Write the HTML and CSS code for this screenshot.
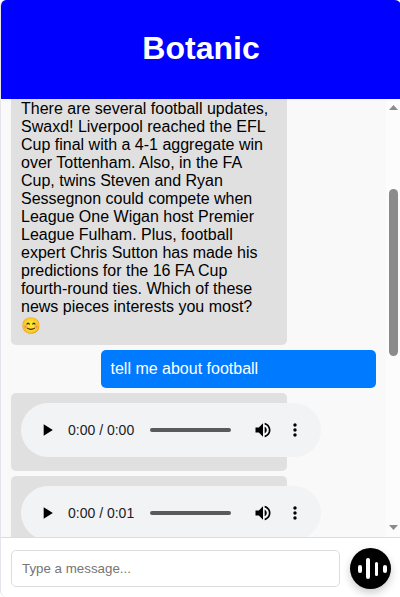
FILE: index.html
```html
<!DOCTYPE html>
<html lang="en">
<head>
<meta charset="utf-8">
<meta name="viewport" content="width=device-width, initial-scale=1">
<title>Botanic</title>
<link rel="stylesheet" href="styles.css">
</head>
<body>
<svg class="sprite" aria-hidden="true">
  <symbol id="play" viewBox="0 0 24 24"><path d="M8 5v14l11-7z"/></symbol>
  <symbol id="volume" viewBox="0 0 24 24"><path d="M3 9v6h4l5 5V4L7 9H3zm13.5 3c0-1.77-1.02-3.29-2.5-4.03v8.05c1.48-.73 2.5-2.25 2.5-4.02zM14 3.23v2.06c2.89.86 5 3.54 5 6.71s-2.11 5.85-5 6.71v2.06c4.01-.91 7-4.49 7-8.77s-2.99-7.86-7-8.77z"/></symbol>
  <symbol id="more" viewBox="0 0 24 24"><path d="M12 8c1.1 0 2-.9 2-2s-.9-2-2-2-2 .9-2 2 .9 2 2 2zm0 2c-1.1 0-2 .9-2 2s.9 2 2 2 2-.9 2-2-.9-2-2-2zm0 6c-1.1 0-2 .9-2 2s.9 2 2 2 2-.9 2-2-.9-2-2-2z"/></symbol>
</svg>
<div class="chat">
  <header class="chat-header"><h1>Botanic</h1></header>
  <main class="chat-body">
    <div class="messages">
      <div class="message bot continued">There are several football updates, Swaxd! Liverpool reached the EFL Cup final with a 4-1 aggregate win over Tottenham. Also, in the FA Cup, twins Steven and Ryan Sessegnon could compete when League One Wigan host Premier League Fulham. Plus, football expert Chris Sutton has made his predictions for the 16 FA Cup fourth-round ties. Which of these news pieces interests you most? 😊</div>
      <div class="message user">tell me about football</div>
      <div class="message bot voice">
        <div class="player">
          <button type="button" aria-label="Play"><svg><use href="#play"/></svg></button>
          <span class="time">0:00 / 0:00</span>
          <input class="seek" type="range" min="0" max="1" value="0" aria-label="Seek">
          <button type="button" aria-label="Mute"><svg><use href="#volume"/></svg></button>
          <button type="button" aria-label="More options"><svg><use href="#more"/></svg></button>
        </div>
      </div>
      <div class="message bot voice">
        <div class="player">
          <button type="button" aria-label="Play"><svg><use href="#play"/></svg></button>
          <span class="time">0:00 / 0:01</span>
          <input class="seek" type="range" min="0" max="1" value="0" aria-label="Seek">
          <button type="button" aria-label="Mute"><svg><use href="#volume"/></svg></button>
          <button type="button" aria-label="More options"><svg><use href="#more"/></svg></button>
        </div>
      </div>
    </div>
    <div class="scrollbar" aria-hidden="true">
      <svg class="arrow" viewBox="0 0 9 5"><path d="M0 5L4.500 0L9 5z"/></svg>
      <div class="track"><div class="thumb"></div></div>
      <svg class="arrow" viewBox="0 0 9 5"><path d="M0 0L4.500 5L9 0z"/></svg>
    </div>
  </main>
  <form class="composer">
    <input class="text" type="text" placeholder="Type a message..." aria-label="Message">
    <button class="speak" type="button" aria-label="Voice input">
      <svg viewBox="0 0 41 41"><rect x="8" y="17" width="4" height="8" rx="2"/><rect x="16" y="10" width="4" height="21" rx="2"/><rect x="25" y="14" width="3" height="14" rx="1.500"/><rect x="33" y="17" width="4" height="8" rx="2"/></svg>
    </button>
  </form>
</div>
</body>
</html>
```

FILE: styles.css
```css
* {
  box-sizing: border-box;
}

body {
  margin: 0;
  overflow: hidden;
  background: #fff;
  font-family: "Liberation Sans", Arial, sans-serif;
  font-size: 16px;
}

.sprite {
  display: none;
}

.chat {
  display: flex;
  flex-direction: column;
  height: 100vh;
  margin-right: -1px;
  overflow: hidden;
  border-left: 1px solid #e4e4ea;
  border-radius: 6px;
  background: #fff;
}

.chat-header {
  flex: none;
  padding: 30px 0 32px;
  background: #00f;
  color: #fff;
  text-align: center;
}

.chat-header h1 {
  margin: 0;
  font-size: 32px;
  line-height: 37px;
}

.chat-body {
  display: flex;
  flex: 1;
  min-height: 0;
  background: #f9f9f9;
}

.messages {
  display: flex;
  flex: 1;
  flex-direction: column;
  gap: 5px;
  min-width: 0;
  padding: 0 10px;
  overflow: hidden;
}

.message {
  flex: none;
  box-sizing: content-box;
  width: 70%;
  padding: 10px;
  border-radius: 5px;
}

.bot {
  align-self: flex-start;
  background: #e0e0e0;
  color: #000;
}

.user {
  align-self: flex-end;
  background: #007bff;
  color: #fff;
}

.continued {
  padding-top: 1px;
  border-radius: 0 0 5px 5px;
}

.voice {
  padding-bottom: 14px;
}

.player {
  display: flex;
  align-items: center;
  width: 300px;
  height: 54px;
  padding: 0 10px;
  border-radius: 27px;
  background: #f1f3f4;
}

.player button {
  display: flex;
  flex: none;
  align-items: center;
  justify-content: center;
  width: 32px;
  height: 32px;
  padding: 0;
  border: 0;
  background: none;
}

.player svg {
  width: 20px;
  height: 20px;
}

.time {
  margin: 0 16px 0 5px;
  color: #202124;
  font-size: 14px;
  white-space: nowrap;
}

.seek {
  flex: 1;
  min-width: 0;
  height: 4px;
  margin: 0 16px 0 0;
  border-radius: 2px;
  background: #5a5a5a;
  appearance: none;
}

.seek::-webkit-slider-thumb {
  width: 0;
  height: 0;
  appearance: none;
}

.scrollbar {
  display: flex;
  flex: none;
  flex-direction: column;
  align-items: center;
  width: 15px;
  padding: 6px 0 7px;
  background: #fcfcfc;
}

.arrow {
  width: 9px;
  height: 5px;
  fill: #8b8b8b;
}

.track {
  flex: 1;
  width: 9px;
  padding-top: 79px;
}

.thumb {
  height: 49%;
  min-height: 167px;
  border-radius: 5px;
  background: #8b8b8b;
}

.composer {
  display: flex;
  flex: none;
  align-items: center;
  gap: 10px;
  padding: 10px 10px 8px;
  border-top: 1px solid #ddd;
}

.text {
  flex: 1;
  min-width: 0;
  height: 37px;
  padding: 0 10px;
  border: 1px solid #ddd;
  border-radius: 5px;
  background: #fff;
  font-family: inherit;
}

.text::placeholder {
  color: #757575;
}

.speak {
  flex: none;
  width: 41px;
  height: 41px;
  padding: 0;
  border: 0;
  border-radius: 50%;
  background: #000;
  box-shadow: 0 4px 8px rgba(0, 0, 0, 0.2);
}

.speak svg {
  display: block;
  width: 41px;
  height: 41px;
  fill: #fff;
}
```
